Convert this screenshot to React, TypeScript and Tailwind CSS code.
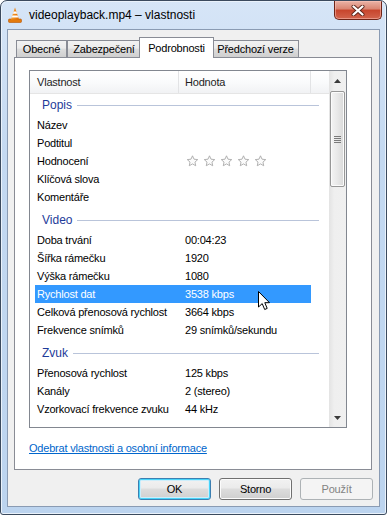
import React from 'react';

const groups: { name: string; rows: [string, string][] }[] = [
  {
    name: 'Popis',
    rows: [
      ['Název', ''],
      ['Podtitul', ''],
      ['Hodnocení', '*'],
      ['Klíčová slova', ''],
      ['Komentáře', ''],
    ],
  },
  {
    name: 'Video',
    rows: [
      ['Doba trvání', '00:04:23'],
      ['Šířka rámečku', '1920'],
      ['Výška rámečku', '1080'],
      ['Rychlost dat', '3538 kbps'],
      ['Celková přenosová rychlost', '3664 kbps'],
      ['Frekvence snímků', '29 snímků/sekundu'],
    ],
  },
  {
    name: 'Zvuk',
    rows: [
      ['Přenosová rychlost', '125 kbps'],
      ['Kanály', '2 (stereo)'],
      ['Vzorkovací frekvence zvuku', '44 kHz'],
    ],
  },
  {
    name: 'Média',
    rows: [],
  },
];

const Star = () => (
  <svg width="13" height="12" viewBox="0 0 12 12">
    <polygon
      points="6,0.8 7.53,4.2 11.23,4.6 8.47,7.1 9.23,10.75 6,8.9 2.77,10.75 3.53,7.1 0.77,4.6 4.47,4.2"
      fill="#fbfbfb"
      stroke="#a9a9a9"
      strokeWidth="0.9"
      strokeLinejoin="round"
    />
  </svg>
);

const VlcIcon = () => (
  <svg width="14" height="16" viewBox="0 0 14 16">
    <defs>
      <linearGradient id="cone" x1="0" x2="1">
        <stop offset="0" stopColor="#f7a233" />
        <stop offset="1" stopColor="#e06a00" />
      </linearGradient>
    </defs>
    <rect x="0.5" y="12" width="13" height="3.5" rx="1" fill="#e37a0c" stroke="#b95500" strokeWidth="0.6" />
    <polygon points="7,0.5 11,12.5 3,12.5" fill="url(#cone)" />
    <polygon points="5.6,4.6 8.4,4.6 9.1,6.8 4.9,6.8" fill="#fff" />
    <polygon points="4.4,8.4 9.6,8.4 10.3,10.6 3.7,10.6" fill="#fff" />
  </svg>
);

const Tab = ({ label, active, w }: { label: string; active?: boolean; w: string }) =>
  active ? (
    <div className={`${w} h-[21px] -mb-px relative z-10 bg-white border border-b-0 border-[#898c95] flex items-start justify-center pt-[2px] -mx-[2px]`}>
      {label}
    </div>
  ) : (
    <div className={`${w} h-[17px] border border-b-0 border-[#898c95] bg-[linear-gradient(#f2f2f2,#ebebeb_45%,#dddddd_50%,#cfcfcf)] flex items-center justify-center`}>
      {label}
    </div>
  );

const Button = ({ label, primary, disabled }: { label: string; primary?: boolean; disabled?: boolean }) => (
  <div
    className={`w-[73px] h-[22px] rounded-[3px] border flex items-center justify-center ${
      disabled
        ? 'border-[#adb2b5] bg-[#f4f4f4] text-[#838383]'
        : primary
        ? 'border-[#3c7fb1] bg-[linear-gradient(#f2f2f2,#ebebeb_45%,#dddddd_50%,#cfcfcf)] shadow-[inset_0_0_0_1px_#48d4f9,inset_0_0_0_2px_#cdeefb] text-black'
        : 'border-[#707070] bg-[linear-gradient(#f2f2f2,#ebebeb_45%,#dddddd_50%,#cfcfcf)] shadow-[inset_0_0_0_1px_#fcfcfc] text-black'
    }`}
  >
    {label}
  </div>
);

export default function App() {
  return (
    <div className="relative w-[387px] h-[515px] overflow-hidden rounded-t-[7px] rounded-b-[3px] border border-[#3b4a5e] bg-[linear-gradient(#d6e5f7,#c4d9f1_30%,#bcd4ef)] shadow-[inset_0_0_0_1px_#eaf2fb] font-['Liberation_Sans',Arial,sans-serif] text-[11px] tracking-[-0.2px] text-black">
      {/* Title bar */}
      <div className="h-[28px] flex items-start">
        <div className="h-[28px] flex items-center pl-[7px] gap-[7px]">
          <VlcIcon />
          <span className="text-[12px] tracking-normal text-black">videoplayback.mp4 – vlastnosti</span>
        </div>
        <div className="ml-auto mr-[4px] w-[48px] h-[19px] rounded-b-[5px] border border-t-0 border-[#6e2417] bg-[linear-gradient(#eab3a6,#d98471_45%,#c7452c_50%,#d2644d)] shadow-[inset_0_0_0_1px_rgba(255,200,190,0.5)] flex items-center justify-center">
          <svg width="14" height="11" viewBox="0 0 14 11">
            <path d="M2.5 1.5 L11.5 9.5 M11.5 1.5 L2.5 9.5" stroke="#5a2318" strokeWidth="4" strokeLinecap="round" />
            <path d="M2.5 1.5 L11.5 9.5 M11.5 1.5 L2.5 9.5" stroke="#ffffff" strokeWidth="2.3" strokeLinecap="round" />
          </svg>
        </div>
      </div>

      {/* Client area */}
      <div className="mx-[6px] h-[478px] border border-[#8a9bb3] bg-[#f0f0f0] pt-[7px]">
        <div className="ml-[8px] h-[20px] flex items-end">
          <Tab label="Obecné" w="w-[51px]" />
          <Tab label="Zabezpečení" w="w-[74px]" />
          <Tab label="Podrobnosti" w="w-[75px]" active />
          <Tab label="Předchozí verze" w="w-[87px]" />
        </div>

        <div className="ml-[6px] w-[358px] h-[413px] border border-[#898c95] bg-white pl-[14px] pt-[12px]">
          {/* List */}
          <div className="w-[318px] h-[358px] border border-[#828790] flex overflow-hidden">
            <div className="flex-1 flex flex-col overflow-hidden">
              <div className="h-[23px] shrink-0 flex border-b border-[#e5e5e5] bg-[linear-gradient(#ffffff,#fafbfc_50%,#f1f2f4)] text-[#1e1e1e]">
                <div className="w-[149px] border-r border-[#e2e3e5] pl-[7px] flex items-center">Vlastnost</div>
                <div className="w-[132px] border-r border-[#e2e3e5] pl-[6px] flex items-center">Hodnota</div>
              </div>
              <div className="flex flex-col">
                {groups.map((g, gi) => (
                  <div key={g.name} className={gi === 0 ? '' : 'mt-[3px]'}>
                    <div className="h-[22px] flex items-center pl-[12px] text-[12px] tracking-normal text-[#1e3b9a]">
                      <span>{g.name}</span>
                      <div className="flex-1 h-px bg-[#b9c4da] ml-[5px] mr-[10px]" />
                    </div>
                    {g.rows.map(([k, v]) => {
                      const sel = k === 'Rychlost dat';
                      return (
                        <div
                          key={k}
                          className={`h-[18px] ml-[5px] w-[276px] flex items-center ${sel ? 'bg-[#3399ff] text-white' : ''}`}
                        >
                          <div className="w-[150px] pl-[2px] whitespace-nowrap">{k}</div>
                          <div className="whitespace-nowrap">
                            {v === '*' ? (
                              <div className="flex gap-[4px] pl-px">
                                <Star />
                                <Star />
                                <Star />
                                <Star />
                                <Star />
                              </div>
                            ) : (
                              v
                            )}
                          </div>
                        </div>
                      );
                    })}
                  </div>
                ))}
              </div>
            </div>

            {/* Scrollbar */}
            <div className="w-[17px] shrink-0 flex flex-col bg-[linear-gradient(90deg,#e3e3e3,#efefef_30%,#f0f0f0)]">
              <div className="h-[20px] flex items-center justify-center">
                <svg width="7" height="4" viewBox="0 0 7 4">
                  <polygon points="3.5,0 7,4 0,4" fill="#3a3a3a" />
                </svg>
              </div>
              <div className="ml-px w-[15px] h-[96px] rounded-[2px] border border-[#979797] bg-[linear-gradient(90deg,#f4f4f4,#e8e8e8_50%,#d9d9d9)] shadow-[inset_0_0_0_1px_#fbfbfb] flex flex-col items-center justify-center gap-px">
                <div className="w-[7px] h-px bg-[#7a7a7a]" />
                <div className="w-[7px] h-px bg-[#7a7a7a]" />
                <div className="w-[7px] h-px bg-[#7a7a7a]" />
                <div className="w-[7px] h-px bg-[#7a7a7a]" />
              </div>
              <div className="flex-1" />
              <div className="h-[19px] flex items-center justify-center">
                <svg width="7" height="4" viewBox="0 0 7 4">
                  <polygon points="0,0 7,0 3.5,4" fill="#3a3a3a" />
                </svg>
              </div>
            </div>
          </div>

          <div className="mt-[12px] text-[#0066cc] underline">Odebrat vlastnosti a osobní informace</div>
        </div>

        <div className="mt-[8px] pr-[6px] flex justify-end gap-[8px]">
          <Button label="OK" primary />
          <Button label="Storno" />
          <Button label="Použít" disabled />
        </div>
      </div>

      {/* Mouse cursor */}
      <svg className="absolute left-[257px] top-[290px]" width="13" height="20" viewBox="0 0 13 20">
        <path d="M0.5 0.5 L0.5 16 L4.2 12.6 L6.7 18.5 L9.2 17.4 L6.8 11.7 L11.5 11.7 Z" fill="#fff" stroke="#000" strokeWidth="1" strokeLinejoin="round" />
      </svg>
    </div>
  );
}
